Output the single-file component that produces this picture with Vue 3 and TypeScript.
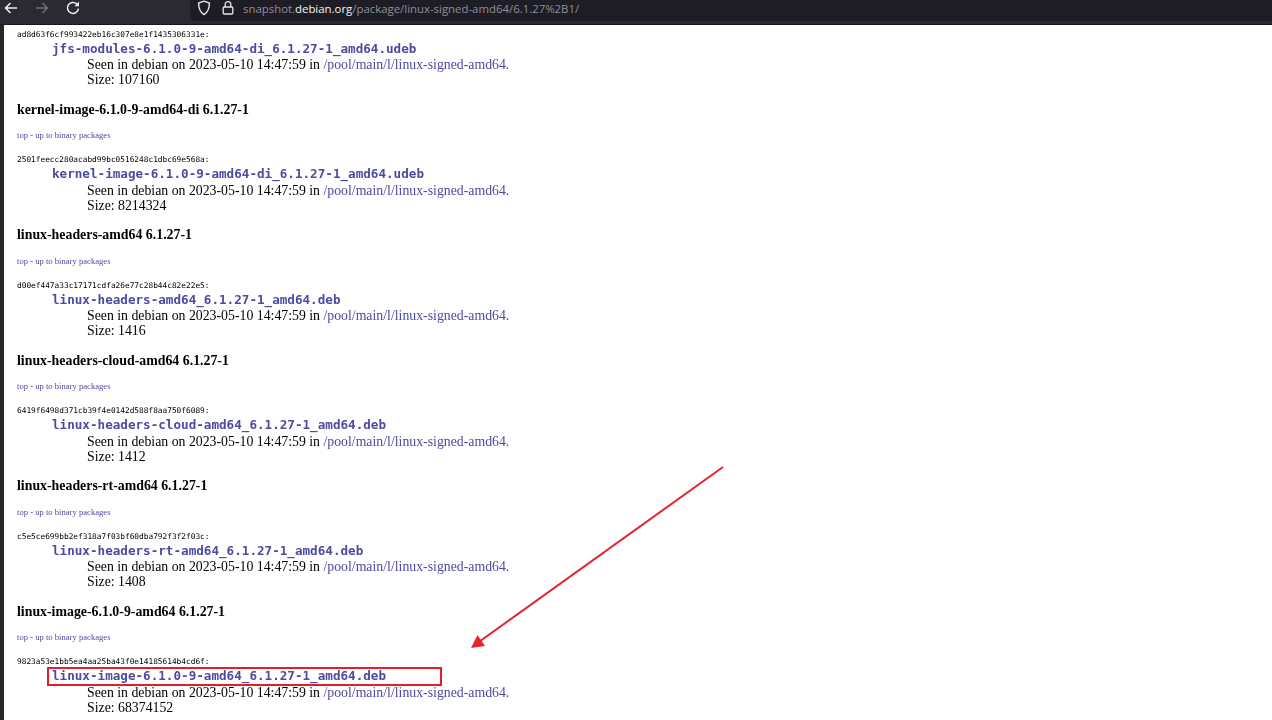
<script setup lang="ts">
interface Pkg {
  heading?: string
  hash: string
  file: string
  size: number
}

const packages: Pkg[] = [
  { hash: 'ad8d63f6cf993422eb16c307e8e1f1435306331e', file: 'jfs-modules-6.1.0-9-amd64-di_6.1.27-1_amd64.udeb', size: 107160 },
  { heading: 'kernel-image-6.1.0-9-amd64-di 6.1.27-1', hash: '2501feecc280acabd99bc0516248c1dbc69e568a', file: 'kernel-image-6.1.0-9-amd64-di_6.1.27-1_amd64.udeb', size: 8214324 },
  { heading: 'linux-headers-amd64 6.1.27-1', hash: 'd00ef447a33c17171cdfa26e77c28b44c82e22e5', file: 'linux-headers-amd64_6.1.27-1_amd64.deb', size: 1416 },
  { heading: 'linux-headers-cloud-amd64 6.1.27-1', hash: '6419f6498d371cb39f4e0142d588f8aa750f6089', file: 'linux-headers-cloud-amd64_6.1.27-1_amd64.deb', size: 1412 },
  { heading: 'linux-headers-rt-amd64 6.1.27-1', hash: 'c5e5ce699bb2ef318a7f03bf60dba792f3f2f03c', file: 'linux-headers-rt-amd64_6.1.27-1_amd64.deb', size: 1408 },
  { heading: 'linux-image-6.1.0-9-amd64 6.1.27-1', hash: '9823a53e1bb5ea4aa25ba43f0e14185614b4cd6f', file: 'linux-image-6.1.0-9-amd64_6.1.27-1_amd64.deb', size: 68374152 }
]
</script>

<template>
  <div class="screen">
    <header class="toolbar">
      <div class="nav">
        <svg class="icon" viewBox="0 0 16 16" width="16" height="16">
          <path d="M14 8H2.500M7.500 3 2.500 8l5 5" fill="none" stroke="#f4f4f6" stroke-width="1.5" />
        </svg>
        <svg class="icon" viewBox="0 0 16 16" width="16" height="16">
          <path d="M2 8h11.500M8.500 3l5 5-5 5" fill="none" stroke="#6f6e76" stroke-width="1.5" />
        </svg>
        <svg class="icon" viewBox="0 0 16 16" width="16" height="16">
          <path d="M13.400 8.600A5.500 5.500 0 1 1 11.600 3.800L13.400 5.600" fill="none" stroke="#f0f0f2" stroke-width="1.5" />
          <path d="M14 1.600v4.600H9.400z" fill="#f0f0f2" />
        </svg>
      </div>
      <div class="urlbar">
        <svg class="shield" viewBox="0 0 14 16" width="14" height="16">
          <path d="M7 1.200 1.600 3.100c0 5 1.400 9.200 5.400 11.600 4-2.400 5.400-6.600 5.400-11.600z" fill="none" stroke="#e6e6e9" stroke-width="1.4" />
        </svg>
        <svg class="lock" viewBox="0 0 12 16" width="12" height="16">
          <path d="M3.200 7V4.400a2.800 2.800 0 0 1 5.600 0V7" fill="none" stroke="#e6e6e9" stroke-width="1.3" />
          <rect x="1.200" y="7" width="9.600" height="7" rx="1" fill="none" stroke="#e6e6e9" stroke-width="1.3" />
        </svg>
        <span class="url">snapshot.<b>debian.org</b>/package/linux-signed-amd64/6.1.27%2B1/</span>
      </div>
    </header>

    <main class="page">
      <section v-for="pkg in packages" :key="pkg.hash" class="pkg">
        <template v-if="pkg.heading">
          <h2>{{ pkg.heading }}</h2>
          <p class="links"><a>top</a> - <a>up to binary packages</a></p>
        </template>
        <div class="hash">{{ pkg.hash }}:</div>
        <a class="file">{{ pkg.file }}</a>
        <div class="seen">Seen in debian on 2023-05-10 14:47:59 in <a>/pool/main/l/linux-signed-amd64.</a></div>
        <div class="size">Size: {{ pkg.size }}</div>
      </section>

      <div class="highlight"></div>
      <svg class="arrow" viewBox="0 0 270 200" width="270" height="200">
        <path d="M262 7 15 184" stroke="#e8242b" stroke-width="2" fill="none" />
        <path d="M10 188 16.500 175 24 186z" fill="#e8242b" />
      </svg>
    </main>
  </div>
</template>

<style>
html,
body {
  margin: 0;
  overflow: hidden;
  background: #fff;
}
</style>

<style scoped>
.screen {
  width: 1272px;
  height: 720px;
  overflow: hidden;
  display: flex;
  flex-direction: column;
  background: #26252c;
}

.toolbar {
  height: 25px;
  flex: none;
  display: flex;
  background: #2b2a33;
  border-bottom: 1px solid #17161c;
  box-sizing: border-box;
}

.nav {
  width: 190px;
  display: flex;
  align-items: center;
  gap: 15px;
  padding: 0 0 9px 3px;
  box-sizing: border-box;
}

.urlbar {
  flex: 1;
  height: 21px;
  display: flex;
  align-items: center;
  background: #1e1d26;
  border-bottom-left-radius: 4px;
  padding: 0 0 5px 7px;
  box-sizing: border-box;
}

.lock {
  margin-left: 11px;
}

.url {
  margin-left: 9px;
  font: 11.4px "Open Sans", sans-serif;
  color: #8f8e96;
  white-space: nowrap;
}

.url b {
  font-weight: 400;
  color: #f4f4f6;
}

.page {
  position: relative;
  flex: 1;
  margin-left: 4px;
  padding: 3.5px 0 0 13px;
  background: #fff;
  color: #000;
  font-family: "Liberation Serif", serif;
  filter: blur(0.4px);
}

.pkg {
  margin-bottom: 12.5px;
}

h2 {
  margin: 0 0 9.5px;
  font-size: 13.85px;
  line-height: 20px;
  font-weight: 700;
}

.links {
  margin: 0 0 13px;
  font-size: 8.62px;
  line-height: 12px;
  color: #333;
}

.links a,
.seen a,
.file {
  color: #4d4aa2;
}

.hash {
  font: 7.81px/11px "DejaVu Sans Mono", monospace;
  margin-bottom: 1px;
}

.file {
  display: block;
  margin-left: 35px;
  margin-bottom: 0.5px;
  font: 700 12.62px/16px "DejaVu Sans Mono", monospace;
}

.seen,
.size {
  margin-left: 70px;
  font-size: 13.8px;
  line-height: 15px;
}

.highlight {
  position: absolute;
  left: 43px;
  top: 642px;
  width: 391px;
  height: 15px;
  border: 2px solid #e81c24;
}

.arrow {
  position: absolute;
  left: 457px;
  top: 435px;
}
</style>
